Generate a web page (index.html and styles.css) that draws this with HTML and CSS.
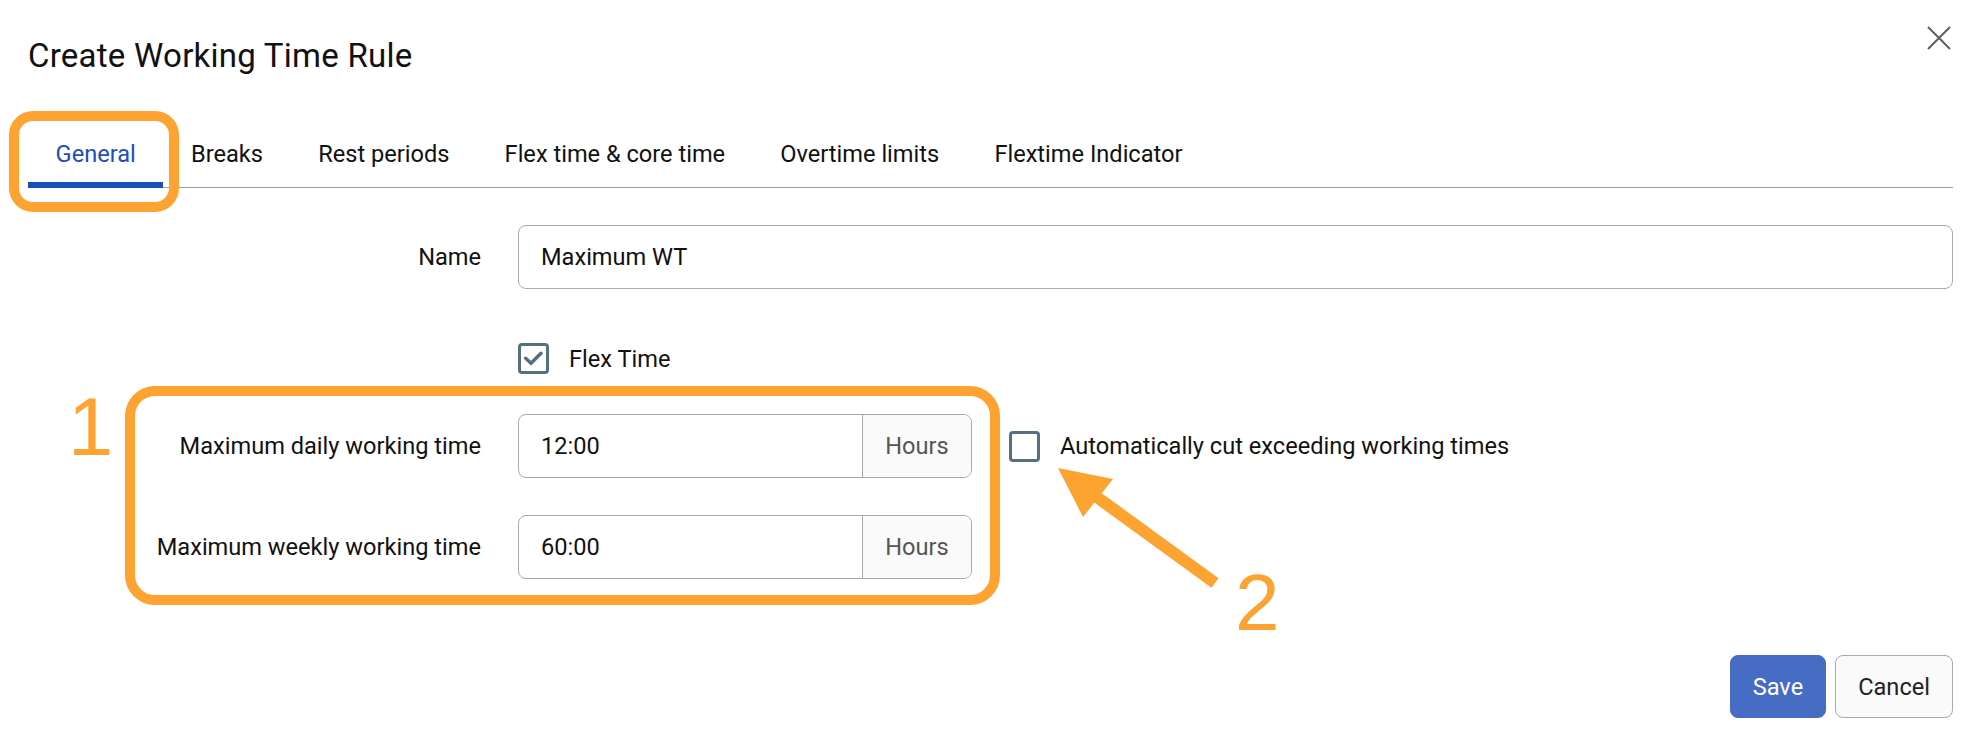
FILE: index.html
```html
<!DOCTYPE html>
<html lang="en">
<head>
<meta charset="utf-8">
<title>Create Working Time Rule</title>
<link rel="stylesheet" href="styles.css">
</head>
<body>
<div class="dialog">
  <header class="dlg-header">
    <h1 class="title">Create Working Time Rule</h1>
    <button class="close" aria-label="Close">
      <svg width="24" height="24" viewBox="0 0 24 24"><path d="M1 1 L23 23 M23 1 L1 23" stroke="#5f5f5f" stroke-width="2" fill="none"/></svg>
    </button>
  </header>
  <nav class="tabs">
    <div class="tab active">General</div>
    <div class="tab">Breaks</div>
    <div class="tab">Rest periods</div>
    <div class="tab">Flex time &amp; core time</div>
    <div class="tab">Overtime limits</div>
    <div class="tab">Flextime Indicator</div>
  </nav>
  <div class="form">
    <div class="row row-name">
      <label class="lbl">Name</label>
      <div class="input span">Maximum WT</div>
    </div>
    <div class="row row-flex">
      <div class="check span">
        <span class="cb"><svg width="25" height="25" viewBox="0 0 25 25"><path d="M4.7 12.3 L10 17.3 L20 7.3" stroke="#57707f" stroke-width="3.5" fill="none" stroke-linecap="round" stroke-linejoin="round"/></svg></span>
        <span class="check-text">Flex Time</span>
      </div>
    </div>
    <div class="row row-daily">
      <label class="lbl">Maximum daily working time</label>
      <div class="igroup"><div class="ival">12:00</div><div class="addon">Hours</div></div>
      <div class="check">
        <span class="cb"></span>
        <span class="check-text">Automatically cut exceeding working times</span>
      </div>
    </div>
    <div class="row row-weekly">
      <label class="lbl">Maximum weekly working time</label>
      <div class="igroup"><div class="ival">60:00</div><div class="addon">Hours</div></div>
    </div>
  </div>
  <div class="actions">
    <button class="btn primary">Save</button>
    <button class="btn">Cancel</button>
  </div>
</div>

<div class="anno anno-tab"></div>
<div class="anno anno-box"></div>
<div class="anno-num n1">1</div>
<div class="anno-num n2">2</div>
<svg class="anno-arrow" width="190" height="140" viewBox="1040 455 190 140">
  <polygon points="1058,468 1113,479 1083,517" fill="#fca331"/>
  <path d="M1094 495 L1215 583" stroke="#fca331" stroke-width="12" fill="none"/>
</svg>
</body>
</html>
```

FILE: styles.css
```css
html, body {
  margin: 0;
  padding: 0;
  background: #ffffff;
}
body {
  width: 1980px;
  height: 746px;
  overflow: hidden;
  font-family: Roboto, "Liberation Sans", sans-serif;
  color: #111111;
}
.dialog {
  padding: 0 27px 0 28px;
}
.dlg-header {
  display: flex;
  justify-content: space-between;
  align-items: flex-start;
  padding-top: 26px;
}
.title {
  margin: 0;
  padding-top: 10px;
  font-size: 33px;
  letter-spacing: 0.25px;
  font-weight: 400;
  line-height: 40px;
  color: #111111;
}
.close {
  border: 0;
  background: transparent;
  padding: 0;
  margin: 0 2px 0 0;
  width: 24px;
  height: 24px;
  display: block;
}
.close svg { display: block; }

.tabs {
  display: flex;
  align-items: flex-end;
  margin-top: 64px;
  border-bottom: 1px solid #9e9e9e;
}
.tab {
  padding: 0 27.6px 14px;
  font-size: 23.6px;
  line-height: 28px;
  color: #111111;
  border-bottom: 6px solid transparent;
  margin-bottom: -1px;
  white-space: nowrap;
}
.tab.active {
  color: #1a4fb9;
  border-bottom-color: #1b4fb8;
}

.row {
  display: grid;
  grid-template-columns: 453px 454px 1fr;
  column-gap: 37px;
  align-items: center;
  font-size: 23.6px;
}
.row-name { margin-top: 37px; }
.row-flex { margin-top: 54px; }
.row-daily { margin-top: 40px; }
.row-weekly { margin-top: 37px; }
.lbl {
  text-align: right;
  color: #111111;
  line-height: 28px;
}
.span { grid-column: 2 / -1; }
.input {
  box-sizing: border-box;
  height: 64px;
  border: 1px solid #a9a9a9;
  border-radius: 8px;
  padding: 0 22px;
  display: flex;
  align-items: center;
  color: #111111;
}
.igroup {
  box-sizing: border-box;
  height: 64px;
  border: 1px solid #a9a9a9;
  border-radius: 8px;
  display: flex;
  overflow: hidden;
}
.ival {
  flex: 1;
  padding: 0 22px;
  display: flex;
  align-items: center;
  color: #111111;
}
.addon {
  width: 108px;
  border-left: 1px solid #a9a9a9;
  background: #fafafa;
  color: #555555;
  display: flex;
  align-items: center;
  justify-content: center;
}
.check {
  display: flex;
  align-items: center;
  gap: 20px;
}
.cb {
  box-sizing: border-box;
  width: 31px;
  height: 31px;
  border: 3px solid #57707f;
  border-radius: 4px;
  flex: none;
  display: block;
}
.cb svg { display: block; }
.check-text {
  line-height: 28px;
  color: #111111;
  white-space: nowrap;
}

.actions {
  display: flex;
  justify-content: flex-end;
  gap: 9px;
  margin-top: 76px;
}
.btn {
  height: 63px;
  padding: 0 22px;
  border-radius: 8px;
  border: 1px solid #a9a9a9;
  background: #fafafa;
  color: #222222;
  font-family: Roboto, "Liberation Sans", sans-serif;
  font-size: 23.6px;
}
.btn.primary {
  background: #466cc3;
  border-color: #466cc3;
  color: #ffffff;
}

.anno {
  position: absolute;
  box-sizing: border-box;
  border: 10px solid #fca331;
}
.anno-tab {
  left: 9px;
  top: 111px;
  width: 170px;
  height: 101px;
  border-radius: 24px;
}
.anno-box {
  left: 125px;
  top: 386px;
  width: 875px;
  height: 219px;
  border-radius: 30px;
}
.anno-num {
  position: absolute;
  font-family: "Liberation Sans", Arial, sans-serif;
  color: #fca331;
  line-height: 80px;
  font-size: 80px;
}
.n1 {
  left: 68px;
  top: 387px;
  font-size: 81px;
  line-height: 81px;
}
.n2 {
  left: 1235px;
  top: 563px;
}
.anno-arrow {
  position: absolute;
  left: 1040px;
  top: 455px;
}
```
